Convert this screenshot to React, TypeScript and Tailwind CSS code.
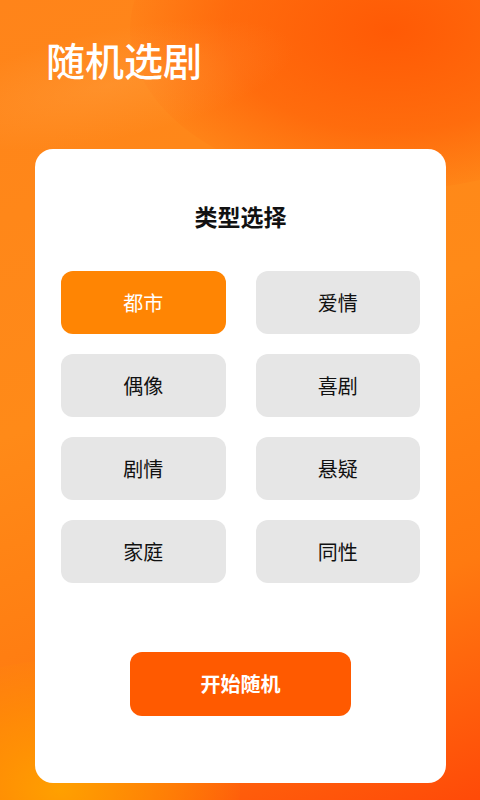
const genres = ['都市', '爱情', '偶像', '喜剧', '剧情', '悬疑', '家庭', '同性']

export default function App() {
  const selected = '都市'

  return (
    <div
      className="relative w-[480px] h-[800px] overflow-hidden bg-[linear-gradient(160deg,#ff841a_0%,#ff8a18_45%,#ff7a10_75%,#ff4a08_100%)]"
      style={{ fontFamily: '"Noto Sans CJK SC", "Noto Sans", sans-serif' }}
    >
      {/* background swooshes */}
      <div className="absolute -top-[130px] right-[-170px] w-[520px] h-[320px] rounded-[50%] bg-[radial-gradient(ellipse_at_center,#ff5a05_0%,rgba(255,90,5,0.6)_45%,rgba(255,110,10,0)_75%)]" />
      <div className="absolute top-[30px] -left-[80px] w-[380px] h-[110px] rotate-[-12deg] rounded-[50%] bg-[radial-gradient(ellipse_at_center,rgba(255,170,80,0.3)_0%,rgba(255,160,60,0)_70%)]" />
      <div className="absolute bottom-[-120px] left-[-120px] w-[360px] h-[260px] rounded-[50%] bg-[radial-gradient(ellipse_at_center,#ffa000_0%,rgba(255,150,0,0.5)_45%,rgba(255,140,0,0)_75%)]" />

      <div className="relative flex flex-col">
        <h1 className="pl-[46px] pt-[33px] text-[39px] leading-[52px] font-medium text-white">
          随机选剧
        </h1>

        <div className="ml-[35px] w-[411px] mt-[64px] h-[634px] rounded-[18px] bg-white px-[26px] flex flex-col">
          <h2 className="mt-[51px] text-center text-[23px] leading-[32px] font-bold text-[#111]">类型选择</h2>

          <div className="mt-[39px] grid grid-cols-2 gap-x-[30px] gap-y-[20px]">
            {genres.map((g) => (
              <button
                key={g}
                className={
                  g === selected
                    ? 'h-[63px] rounded-[12px] bg-[#ff8503] text-white text-[20px]'
                    : 'h-[63px] rounded-[12px] bg-[#e6e6e6] text-[#111] text-[20px]'
                }
              >
                {g}
              </button>
            ))}
          </div>

          <div className="mt-[69px] flex justify-center">
            <button className="w-[221px] h-[64px] rounded-[12px] bg-[#ff5a00] text-white text-[20px] font-bold">
              开始随机
            </button>
          </div>
        </div>
      </div>
    </div>
  )
}
